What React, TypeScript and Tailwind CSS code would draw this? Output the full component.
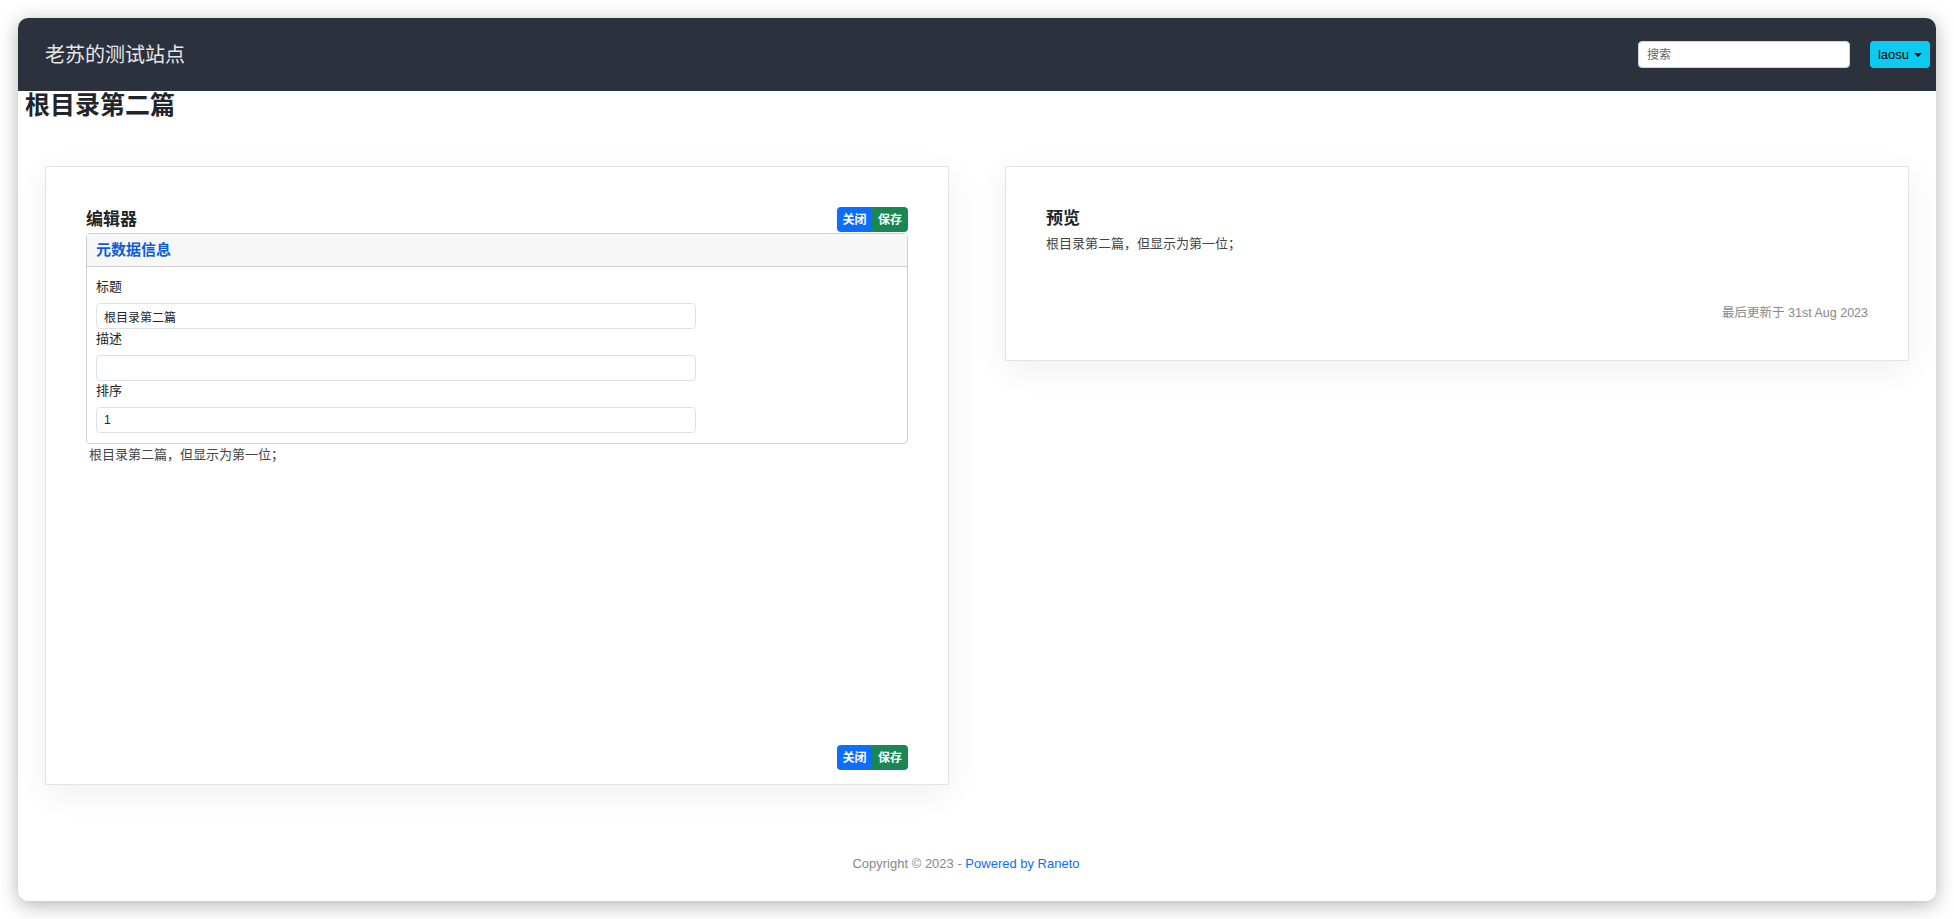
import React from 'react';

const font = { fontFamily: '"Liberation Sans", "Noto Sans CJK SC", sans-serif' };

function ButtonPair() {
  return (
    <div className="flex h-[25px] overflow-hidden rounded-[4px] text-[12px] font-bold text-white">
      <button className="flex w-[35px] items-center justify-center bg-[#0d6efd]">关闭</button>
      <button className="flex w-[36px] items-center justify-center bg-[#198754]">保存</button>
    </div>
  );
}

function Field({ label, value }: { label: string; value: string }) {
  return (
    <div>
      <label className="block h-[20px] text-[13px] leading-[20px] text-[#212529]">{label}</label>
      <input
        readOnly
        value={value}
        className="mt-[6px] block h-[26px] w-[600px] rounded-[4px] border border-[#dee2e6] bg-white px-[7px] text-[12px] text-[#212529] outline-none"
      />
    </div>
  );
}

export default function App() {
  return (
    <div className="h-[919px] w-full bg-white p-[18px]" style={font}>
      <div className="flex h-[883px] flex-col overflow-hidden rounded-[10px] bg-white shadow-[0_4px_20px_rgba(0,0,0,0.3)]">
        {/* navbar */}
        <div className="flex h-[73px] shrink-0 items-center bg-[#2c313e] pl-[27px] pr-[6px]">
          <div className="text-[20px] text-[#e6e6e6]">老苏的测试站点</div>
          <div className="ml-auto flex items-center gap-[20px]">
            <input
              placeholder="搜索"
              className="h-[27px] w-[212px] rounded-[4px] border border-[#ced4da] bg-white px-[8px] text-[12px] text-[#212529] outline-none placeholder:text-[#666]"
            />
            <button className="flex h-[27px] w-[60px] items-center justify-center gap-[5px] rounded-[4px] bg-[#0dcaf0] text-[13px] text-black">
              laosu
              <span className="h-0 w-0 border-x-[4px] border-t-[4px] border-x-transparent border-t-black" />
            </button>
          </div>
        </div>

        <h1 className="pl-[7px] text-[25px] font-bold leading-[29px] text-[#212529]">根目录第二篇</h1>

        {/* cards */}
        <div className="mt-[46px] grid grid-cols-2 items-start gap-[56px] px-[27px]">
          <div className="flex h-[619px] flex-col border border-[#e5e5e5] bg-white px-[40px] pb-[14px] pt-[40px] shadow-[0_8px_30px_rgba(0,0,0,0.07)]">
            <div className="flex items-end justify-between">
              <h2 className="text-[17px] font-bold leading-[24px] text-[#212529]">编辑器</h2>
              <ButtonPair />
            </div>
            <div className="mt-px rounded-[4px] border border-[#d0d0d0]">
              <div className="flex h-[33px] items-center border-b border-[#d0d0d0] bg-[#f7f7f7] px-[9px] text-[15px] font-bold text-[#0b5ed7]">
                元数据信息
              </div>
              <div className="flex flex-col px-[9px] pb-[10px] pt-[10px]">
                <Field label="标题" value="根目录第二篇" />
                <Field label="描述" value="" />
                <Field label="排序" value="1" />
              </div>
            </div>
            <p className="pl-[3px] text-[13px] leading-[21px] text-[#444]">根目录第二篇，但显示为第一位；</p>
            <div className="mt-auto flex justify-end">
              <ButtonPair />
            </div>
          </div>

          <div className="flex h-[195px] flex-col border border-[#e5e5e5] bg-white px-[40px] pt-[40px] shadow-[0_8px_30px_rgba(0,0,0,0.07)]">
            <h2 className="text-[17px] font-bold leading-[24px] text-[#212529]">预览</h2>
            <p className="mt-[3px] text-[13px] leading-[20px] text-[#444]">根目录第二篇，但显示为第一位；</p>
            <div className="mt-[49px] text-right text-[12.5px] leading-[20px] text-[#888]">最后更新于 31st Aug 2023</div>
          </div>
        </div>

        {/* footer */}
        <div className="mt-auto flex justify-center pb-[28px] pr-[22px] text-[13px] text-[#888]">
          <span>
            Copyright © 2023 - <a className="text-[#0d6efd]">Powered by Raneto</a>
          </span>
        </div>
      </div>
    </div>
  );
}
